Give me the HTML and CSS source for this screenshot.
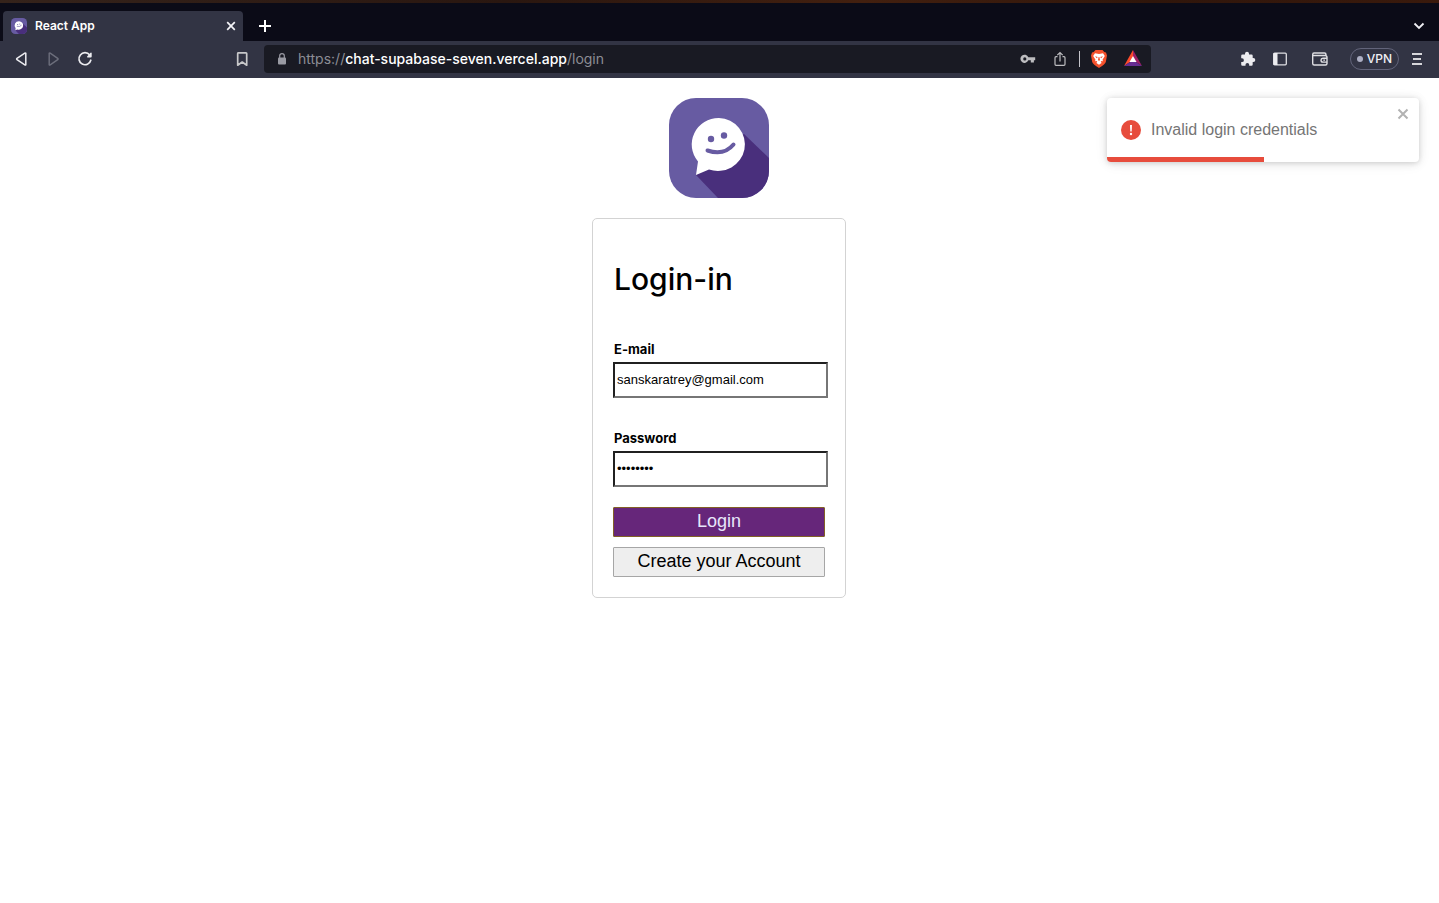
FILE: index.html
```html
<!DOCTYPE html>
<html lang="en">
<head>
<meta charset="utf-8">
<title>React App</title>
<link rel="stylesheet" href="styles.css">
</head>
<body>
<svg class="defs" aria-hidden="true">
  <symbol id="chat-logo" viewBox="0 0 100 100">
    <rect width="100" height="100" rx="27" fill="#675ba2"/>
    <path d="M75 36 L100 60 V73 A27 27 0 0 1 73 100 H49 L27 77 L50 50 Z" fill="#492f7c"/>
    <path d="M50 20 a27 26.5 0 1 1 -10 51.500 L27 77 L29 63.500 A27 26.5 0 0 1 50 20 Z" fill="#fff"/>
    <circle cx="42" cy="41" r="3.200" fill="#675ba2"/>
    <circle cx="55" cy="37.500" r="3.200" fill="#675ba2"/>
    <path d="M38.500 52.500 Q55 58 64.500 46.500" fill="none" stroke="#675ba2" stroke-width="4" stroke-linecap="round"/>
  </symbol>
</svg>
<header class="browser">
  <div class="wallpaper"></div>
  <div class="tabs">
    <div class="tab">
      <svg class="favicon"><use href="#chat-logo"/></svg>
      <span class="tab-title">React App</span>
      <button class="icon-button" aria-label="Close tab"><svg width="10" height="10" viewBox="0 0 10 10"><path d="M1.200 1.200 L8.800 8.800 M8.800 1.200 L1.200 8.800" stroke="#f4f4f8" stroke-width="1.700"/></svg></button>
    </div>
    <button class="icon-button new-tab" aria-label="New tab"><svg width="14" height="14" viewBox="0 0 14 14"><path d="M7 1 V13 M1 7 H13" stroke="#fff" stroke-width="2"/></svg></button>
    <button class="icon-button tab-list" aria-label="Search tabs"><svg width="12" height="8" viewBox="0 0 12 8"><path d="M1.500 1.500 L6 6 L10.500 1.500" fill="none" stroke="#f0f0f4" stroke-width="1.800"/></svg></button>
  </div>
  <div class="toolbar">
    <nav class="history">
      <button class="icon-button" aria-label="Back"><svg width="16" height="16" viewBox="0 0 16 16"><path d="M12.800 2.200 V13.800 Q12.500 14.300 11.800 13.900 L4 8.700 Q3.200 8 4 7.300 L11.800 2.100 Q12.500 1.700 12.800 2.200 Z" fill="none" stroke="#ececf0" stroke-width="1.500"/></svg></button>
      <button class="icon-button" aria-label="Forward"><svg width="16" height="16" viewBox="0 0 16 16"><path d="M4.200 2.200 V13.800 Q4.500 14.300 5.200 13.900 L12.700 8.700 Q13.500 8 12.700 7.300 L5.200 2.100 Q4.500 1.700 4.200 2.200 Z" fill="none" stroke="#6c6e7c" stroke-width="1.400"/></svg></button>
      <button class="icon-button" aria-label="Reload"><svg width="16" height="16" viewBox="0 0 16 16"><path d="M12.700 4 A6 6 0 1 0 13.800 9.200" fill="none" stroke="#ececf0" stroke-width="1.700" stroke-linecap="round"/><path d="M14.700 2 V5.500 Q14.700 6.500 13.700 6.500 H10.500 Q9.500 6 10.300 5.200 L13.500 1.700 Q14.500 1.300 14.700 2 Z" fill="#ececf0"/></svg></button>
    </nav>
    <button class="icon-button" aria-label="Bookmark"><svg width="16" height="16" viewBox="0 0 16 16"><path d="M4 1.800 H12 Q12.700 1.800 12.700 2.500 V14.200 L8.200 11 L3.700 14.200 V2.500 Q3.700 1.800 4 1.800 Z" fill="none" stroke="#c8c8ca" stroke-width="1.700" stroke-linejoin="round"/></svg></button>
    <div class="address">
      <svg width="10" height="14" viewBox="0 0 10 14"><path d="M2.700 6 V3.800 Q2.700 1.700 5 1.700 Q7.300 1.700 7.300 3.800 V6" fill="none" stroke="#999aa3" stroke-width="1.200"/><rect x="1" y="5.500" width="8" height="7" rx="1" fill="#999aa3"/></svg>
      <span class="url">https://<b>chat-supabase-seven.vercel.app</b>/login</span>
      <button class="icon-button" aria-label="Passwords"><svg width="16" height="16" viewBox="0 0 16 16"><path fill-rule="evenodd" d="M8.300 6.300 H15.200 V9.300 H13.900 V11.500 H10.800 V9.300 H8.300 A4.100 4.100 0 1 1 8.300 6.300 Z M4.800 6.300 A1.600 1.600 0 1 0 4.800 9.500 A1.600 1.600 0 1 0 4.800 6.300 Z" fill="#bcbcbf"/></svg></button>
      <button class="icon-button" aria-label="Share"><svg width="16" height="16" viewBox="0 0 16 16"><path d="M5.500 5.700 H4 Q3 5.700 3 6.700 V13.300 Q3 14.300 4 14.300 H12 Q13 14.300 13 13.300 V6.700 Q13 5.700 12 5.700 H10.500 M8 10.500 V1.500 M5.300 4.200 L8 1.500 L10.700 4.200" fill="none" stroke="#bcbcbf" stroke-width="1.200"/></svg></button>
      <span class="divider"></span>
      <button class="icon-button" aria-label="Brave Shields"><svg width="18" height="20" viewBox="0 0 18 20"><path d="M5.500 1 H12.500 L14.300 3 L16 3.500 L17 6.500 L15.800 13 Q15 15.500 9 19 Q3 15.500 2.200 13 L1 6.500 L2 3.500 L3.700 3 Z" fill="#f4512c"/><path d="M5 4.300 L9 5 L13 4.300 L14.800 7 L12.500 10.800 L13 12.300 L10.800 12 L11.500 14 L9 15.800 L6.500 14 L7.200 12 L5 12.300 L5.500 10.800 L3.200 7 Z" fill="#fff"/><path d="M5 7.300 L7.800 8 L6.800 9.300 Z M13 7.300 L10.200 8 L11.200 9.300 Z M8.600 8 H9.400 L10 11 L9 12 L8 11 Z" fill="#f4512c"/></svg></button>
      <button class="icon-button" aria-label="Brave Rewards"><svg width="18" height="17" viewBox="0 0 18 17"><path d="M9 0 L0 16 L9 10 Z" fill="#ff4b2b"/><path d="M9 0 L18 16 L9 10 Z" fill="#9e1f63"/><path d="M0 16 H18 L9 10 Z" fill="#662d91"/><path d="M9 6 L12.500 12 H5.500 Z" fill="#fff"/></svg></button>
    </div>
    <div class="extensions">
      <button class="icon-button" aria-label="Extensions"><svg width="16" height="16" viewBox="0 0 16 16"><path d="M2.500 3.500 H5 V2.800 A2 2 0 0 1 9 2.800 V3.500 H11.500 Q12.700 3.500 12.700 4.700 V7.100 H13.300 A2 2 0 0 1 13.300 11.100 H12.700 V13.500 Q12.700 14.700 11.500 14.700 H9.200 V13.800 A1.800 1.800 0 0 0 5.500 13.800 V14.700 H2.500 Q1.200 14.700 1.200 13.500 V11.100 H2 A1.900 1.900 0 0 0 2 7.300 H1.200 V4.700 Q1.200 3.500 2.500 3.500 Z" fill="#ececf0"/></svg></button>
      <button class="icon-button" aria-label="Sidebar"><svg width="16" height="16" viewBox="0 0 16 16"><rect x="1.700" y="2.200" width="12.600" height="11.600" rx="1" fill="none" stroke="#dedee2" stroke-width="1.300"/><path d="M1.500 2 H5.500 V14 H1.500 Z" fill="#ececf0"/></svg></button>
      <button class="icon-button wallet" aria-label="Wallet"><svg width="18" height="16" viewBox="0 0 18 16"><path d="M15 5 V3.500 Q15 2 13.500 2 H3 Q1.700 2 1.700 3.500 V12.500 Q1.700 14 3.200 14 H14.500 Q16 14 16 12.500 V6.500 Q16 4.500 14 4.500 H3 Q1.700 4.500 1.700 3.500 M16 7.300 H12 Q10 7.500 10 9.200 Q10 11 12 11.100 H16" fill="none" stroke="#dedee2" stroke-width="1.400"/><path d="M12.300 9.200 H14" stroke="#dedee2" stroke-width="1.200"/></svg></button>
      <button class="vpn"><span class="dot"></span>VPN</button>
      <button class="icon-button" aria-label="Menu"><svg width="12" height="16" viewBox="0 0 12 16"><path d="M1 3 H11 M2 8 H10 M1 13 H11" stroke="#d6d6da" stroke-width="2"/></svg></button>
    </div>
  </div>
</header>
<main class="page">
  <svg class="logo" role="img" aria-label="Chat"><use href="#chat-logo"/></svg>
  <form class="card">
    <h1>Login-in</h1>
    <div class="field">
      <label for="email">E-mail</label>
      <input id="email" type="email" value="sanskaratrey@gmail.com">
    </div>
    <div class="field">
      <label for="password">Password</label>
      <input id="password" type="password" value="password">
    </div>
    <div class="actions">
      <button class="action primary" type="submit">Login</button>
      <button class="action" type="button">Create your Account</button>
    </div>
  </form>
  <div class="toast" role="alert">
    <svg width="20" height="20" viewBox="0 0 20 20"><circle cx="10" cy="10" r="10" fill="#e74c3c"/><path d="M9 5 H11 L10.700 11.500 H9.300 Z" fill="#fff"/><circle cx="10" cy="14" r="1.200" fill="#fff"/></svg>
    <p>Invalid login credentials</p>
    <button class="icon-button toast-close" aria-label="Close"><svg width="12" height="12" viewBox="0 0 12 12"><path d="M1.500 1.500 L10.500 10.500 M10.500 1.500 L1.500 10.500" stroke="#b2b2b2" stroke-width="2"/></svg></button>
    <div class="progress"></div>
  </div>
</main>
</body>
</html>
```
FILE: styles.css
```css
* { box-sizing: border-box; }
body {
  margin: 0;
  background: #fff;
  color: #000;
  font-family: Inter, "Liberation Sans", sans-serif;
}
.defs { position: absolute; width: 0; height: 0; }
svg { display: block; flex: none; }
.icon-button {
  display: flex;
  flex: none;
  padding: 0;
  border: 0;
  background: none;
}

.wallpaper {
  height: 3px;
  background: linear-gradient(90deg, #35231b, #2a1710 35%, #43200f 60%, #30160b 80%, #3a1a0c);
}
.tabs {
  display: flex;
  align-items: center;
  padding: 8px 14px 0 3px;
  background: #0b0b17;
}
.tab {
  display: flex;
  align-items: center;
  gap: 8px;
  width: 240px;
  height: 30px;
  padding: 0 7px 0 8px;
  border-radius: 4px 4px 0 0;
  background: #323444;
  color: #fff;
  font-size: 12px;
  font-weight: 600;
}
.favicon { width: 16px; height: 16px; }
.tab-title { flex: 1; padding-bottom: 2px; }
.new-tab { margin-left: 15px; }
.tab-list { margin-left: auto; }

.toolbar {
  display: flex;
  align-items: center;
  height: 37px;
  padding: 0 16px 2px 13px;
  background: #323444;
}
.history { display: flex; gap: 16px; margin-right: 141px; }
.address {
  display: flex;
  flex: 1;
  align-items: center;
  gap: 16px;
  height: 28px;
  margin: 0 89px 0 14px;
  padding: 0 9px 0 13px;
  border-radius: 4px;
  background: #191a23;
}
.url {
  flex: 1;
  margin-left: -5px;
  color: #8c8d95;
  font-size: 14px;
  white-space: nowrap;
}
.url b { color: #fff; font-weight: 500; }
.divider {
  width: 1px;
  height: 16px;
  margin: 0 -6px 0 -5px;
  background: #c4c4ca;
}
.extensions { display: flex; align-items: center; gap: 16px; }
.wallet { margin: 0 5px 0 7px; }
.vpn {
  display: flex;
  align-items: center;
  gap: 4px;
  height: 22px;
  margin-right: -4px;
  padding: 0 6px;
  border: 1px solid #62647a;
  border-radius: 11px;
  background: none;
  color: #f0f0f4;
  font: 500 12px Inter, sans-serif;
}
.dot { width: 6px; height: 6px; border-radius: 50%; background: #adafc4; }

.page {
  display: flex;
  flex-direction: column;
  align-items: center;
  gap: 20px;
  position: relative;
  padding: 20px 21px 20px 20px;
}
.logo { width: 100px; height: 100px; }
.card {
  width: 254px;
  padding: 20px;
  border: 1px solid #d3d3d3;
  border-radius: 5px;
}
h1 {
  margin: 21px 0 42px;
  padding-left: 1px;
  font-size: 30px;
  font-weight: 500;
  line-height: 39px;
}
.field { margin-bottom: 32px; }
.field + .field { margin-bottom: 20px; }
label {
  display: block;
  margin-bottom: 5px;
  padding-left: 1px;
  font-size: 13px;
  font-weight: 700;
  line-height: 16px;
}
input {
  display: block;
  width: calc(100% + 3px);
  height: 36px;
  padding: 0 2px 2px;
  border: 2px solid;
  border-color: #202020 #767676 #767676 #202020;
  border-radius: 0;
  background: #fff;
  color: #000;
  font: 13px "Liberation Sans", sans-serif;
}
.actions { display: grid; gap: 10px; }
.action {
  height: 30px;
  padding: 0 0 2px;
  border: 1px solid #a6a6a6;
  border-radius: 1px;
  background: #eee;
  color: #000;
  font: 18px "Liberation Sans", sans-serif;
}
.primary {
  border-color: #826026;
  background: #66267a;
  color: #e6e6fa;
}

.toast {
  display: flex;
  align-items: center;
  gap: 10px;
  position: absolute;
  top: 20px;
  right: 20px;
  width: 312px;
  height: 64px;
  padding: 14px;
  overflow: hidden;
  border-radius: 4px;
  background: #fff;
  box-shadow: 0 1px 10px rgba(0, 0, 0, 0.1), 0 2px 15px rgba(0, 0, 0, 0.05), 0 1px 5px rgba(0, 0, 0, 0.1);
  color: #757575;
  font-family: "Liberation Sans", sans-serif;
  font-size: 16px;
}
.toast p { margin: 0; }
.toast-close { position: absolute; top: 10px; right: 10px; }
.progress {
  position: absolute;
  bottom: 0;
  left: 0;
  width: 157px;
  height: 5px;
  background: #e74c3c;
}
```
